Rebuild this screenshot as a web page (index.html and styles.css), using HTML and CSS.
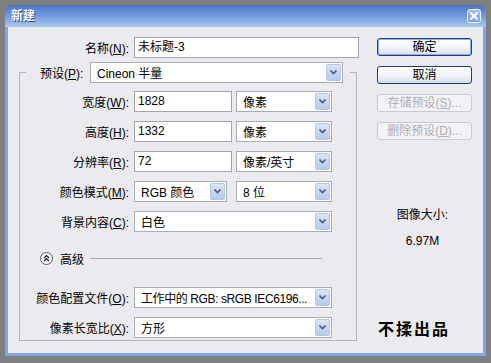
FILE: index.html
```html
<!DOCTYPE html>
<html lang="zh-CN">
<head>
    <meta charset="UTF-8">
    <title>新建</title>
    <link rel="stylesheet" href="styles.css">
</head>
<body>
    <div class="window">
        <!-- Заголовок окна -->
        <div class="titlebar">
            <span class="title">新建</span>
            <span class="close-btn">
                <svg width="8" height="8" viewBox="0 0 8 8"><path d="M1 1L7 7M7 1L1 7" stroke="#fff" stroke-width="2" stroke-linecap="square"/></svg>
            </span>
        </div>

        <div class="content">
            <div class="main">
                <div class="row">
                    <span class="lbl">名称(<u>N</u>):</span>
                    <div class="input name-input">未标题-3</div>
                </div>

                <fieldset class="group">
                    <legend class="preset">
                        <span class="preset-lbl">预设(<u>P</u>):</span>
                        <div class="select preset-select">Cineon 半量<span class="arrow"><svg width="7" height="5" viewBox="0 0 7 5"><path d="M0.5 0.5L3.5 3.5L6.5 0.5" fill="none" stroke="#4a5d86" stroke-width="1.6"/></svg></span></div>
                    </legend>

                    <div class="row">
                        <span class="lbl">宽度(<u>W</u>):</span>
                        <div class="input short">1828</div>
                        <div class="select unit">像素<span class="arrow"><svg width="7" height="5" viewBox="0 0 7 5"><path d="M0.5 0.5L3.5 3.5L6.5 0.5" fill="none" stroke="#4a5d86" stroke-width="1.6"/></svg></span></div>
                    </div>
                    <div class="row">
                        <span class="lbl">高度(<u>H</u>):</span>
                        <div class="input short">1332</div>
                        <div class="select unit">像素<span class="arrow"><svg width="7" height="5" viewBox="0 0 7 5"><path d="M0.5 0.5L3.5 3.5L6.5 0.5" fill="none" stroke="#4a5d86" stroke-width="1.6"/></svg></span></div>
                    </div>
                    <div class="row">
                        <span class="lbl">分辨率(<u>R</u>):</span>
                        <div class="input short">72</div>
                        <div class="select unit">像素/英寸<span class="arrow"><svg width="7" height="5" viewBox="0 0 7 5"><path d="M0.5 0.5L3.5 3.5L6.5 0.5" fill="none" stroke="#4a5d86" stroke-width="1.6"/></svg></span></div>
                    </div>
                    <div class="row">
                        <span class="lbl">颜色模式(<u>M</u>):</span>
                        <div class="select mode">RGB 颜色<span class="arrow"><svg width="7" height="5" viewBox="0 0 7 5"><path d="M0.5 0.5L3.5 3.5L6.5 0.5" fill="none" stroke="#4a5d86" stroke-width="1.6"/></svg></span></div>
                        <div class="select unit">8 位<span class="arrow"><svg width="7" height="5" viewBox="0 0 7 5"><path d="M0.5 0.5L3.5 3.5L6.5 0.5" fill="none" stroke="#4a5d86" stroke-width="1.6"/></svg></span></div>
                    </div>
                    <div class="row">
                        <span class="lbl">背景内容(<u>C</u>):</span>
                        <div class="select full">白色<span class="arrow"><svg width="7" height="5" viewBox="0 0 7 5"><path d="M0.5 0.5L3.5 3.5L6.5 0.5" fill="none" stroke="#4a5d86" stroke-width="1.6"/></svg></span></div>
                    </div>

                    <div class="advanced">
                        <span class="toggle">
                            <svg width="13" height="13" viewBox="0 0 13 13">
                                <circle cx="6.5" cy="6.5" r="6" fill="#fdfdfd" stroke="#5b5b60"/>
                                <path d="M4 6L6.5 3.6L9 6M4 9L6.5 6.6L9 9" fill="none" stroke="#222" stroke-width="1.2"/>
                            </svg>
                        </span>
                        <span>高级</span>
                        <span class="line"></span>
                    </div>

                    <div class="row profile-row">
                        <span class="lbl">颜色配置文件(<u>O</u>):</span>
                        <div class="select full"><span class="txt">工作中的 RGB: sRGB IEC6196...</span><span class="arrow"><svg width="7" height="5" viewBox="0 0 7 5"><path d="M0.5 0.5L3.5 3.5L6.5 0.5" fill="none" stroke="#4a5d86" stroke-width="1.6"/></svg></span></div>
                    </div>
                    <div class="row aspect-row">
                        <span class="lbl">像素长宽比(<u>X</u>):</span>
                        <div class="select full">方形<span class="arrow"><svg width="7" height="5" viewBox="0 0 7 5"><path d="M0.5 0.5L3.5 3.5L6.5 0.5" fill="none" stroke="#4a5d86" stroke-width="1.6"/></svg></span></div>
                    </div>
                </fieldset>
            </div>

            <div class="side">
                <div class="btn default">确定</div>
                <div class="btn">取消</div>
                <div class="btn disabled">存储预设(<u>S</u>)...</div>
                <div class="btn disabled">删除预设(<u>D</u>)...</div>

                <div class="info-label">图像大小:</div>
                <div class="info-value">6.97M</div>

                <div class="brand">不揉出品</div>
            </div>
        </div>
    </div>
</body>
</html>
```

FILE: styles.css
```css
body {
    margin: 0;
    background-color: #7f7f7f;
    font-family: "Liberation Sans", "Noto Sans CJK SC", sans-serif;
    font-size: 12px;
    color: #000;
}
.window {
    margin: 5px;
    width: 481px;
}
.titlebar {
    height: 22px;
    box-sizing: border-box;
    padding: 0 5px 0 6px;
    display: flex;
    align-items: center;
    border-radius: 7px 7px 0 0;
    background: linear-gradient(#4a76c6, #6d96da 45%, #adc7ef);
}
.title {
    color: #fff;
    font-weight: bold;
    font-size: 12px;
    line-height: 14px;
    text-shadow: 1px 1px 0 #2a4f96;
}
.close-btn {
    margin-left: auto;
    width: 14px;
    height: 14px;
    box-sizing: border-box;
    border: 1px solid #f2f6fd;
    border-radius: 3px;
    background: linear-gradient(#a5c0ef, #7a9ee0);
    display: flex;
    align-items: center;
    justify-content: center;
}
.content {
    height: 329px;
    box-sizing: border-box;
    border: 3px solid #7fa6ea;
    border-top: none;
    background-color: #ebeaee;
    display: flex;
}
.main {
    width: 354px;
    box-sizing: border-box;
    padding: 10px 0 0 11px;
}
.row {
    display: flex;
    align-items: center;
    height: 21px;
}
.group .row + .row {
    margin-top: 9px;
}
.lbl {
    width: 110px;
    margin-right: 5px;
    text-align: right;
    white-space: nowrap;
    flex-shrink: 0;
}
.group .lbl {
    width: 109px;
}
.input {
    height: 21px;
    box-sizing: border-box;
    border: 1px solid #a3a3a8;
    background-color: #fff;
    padding: 0 3px;
    line-height: 19px;
}
.name-input {
    width: 225px;
}
.short {
    width: 98px;
    margin-right: 4px;
}
.select {
    height: 21px;
    box-sizing: border-box;
    border: 1px solid #a7acb6;
    background-color: #fff;
    padding-left: 6px;
    display: flex;
    align-items: center;
    white-space: nowrap;
    overflow: hidden;
    flex-shrink: 0;
}
.select .txt {
    overflow: hidden;
    letter-spacing: -0.4px;
}
.arrow {
    margin-left: auto;
    flex-shrink: 0;
    width: 15px;
    height: 17px;
    margin-right: 1px;
    box-sizing: border-box;
    border: 1px solid #b8c6e6;
    border-radius: 2px;
    background: linear-gradient(#dbe4f8, #b8c9ef);
    display: flex;
    align-items: center;
    justify-content: center;
}
.unit {
    width: 96px;
}
.mode {
    width: 93px;
    margin-right: 9px;
}
.full {
    width: 198px;
}
.group {
    margin: 4px 0 0 0;
    width: 338px;
    box-sizing: border-box;
    border: 1px solid #b3b2b8;
    padding: 8px 24px 2px 0;
    min-width: 0;
}
.preset {
    margin-left: 6px;
    padding: 0 7px 0 14px;
    display: flex;
    align-items: center;
    gap: 2px;
    width: 324px;
    box-sizing: border-box;
}
.preset-lbl {
    width: 48px;
    white-space: nowrap;
    flex-shrink: 0;
}
.preset-select {
    width: 253px;
}
.advanced {
    margin: 20px 10px 0 20px;
    height: 13px;
    display: flex;
    align-items: center;
}
.toggle {
    display: flex;
    margin-right: 7px;
}
.line {
    flex: 1;
    height: 1px;
    margin-left: 6px;
    background-color: #a9a8ae;
}
.profile-row {
    margin-top: 22px;
}
.group .aspect-row {
    margin-top: 7px;
}
.side {
    flex: 1;
    padding-top: 11px;
    display: flex;
    flex-direction: column;
}
.btn {
    width: 95px;
    height: 18px;
    margin-left: 15px;
    margin-bottom: 10px;
    box-sizing: border-box;
    border: 1px solid #1d3b7e;
    border-radius: 3px;
    background: linear-gradient(#ffffff, #eef1f7 60%, #d3dbeb);
    text-align: center;
    line-height: 16px;
}
.default {
    box-shadow: inset 0 0 0 1px #8fb0ee;
}
.disabled {
    border-color: #cac9cf;
    background: #f3f3f5;
    color: #aeadb3;
}
.info-label {
    margin-top: 58px;
    text-align: center;
    line-height: 14px;
}
.info-value {
    margin-top: 12px;
    text-align: center;
    line-height: 14px;
}
.brand {
    margin-top: 72px;
    padding-left: 16px;
    font-size: 16px;
    font-weight: bold;
    letter-spacing: 2px;
    line-height: 20px;
}
```
